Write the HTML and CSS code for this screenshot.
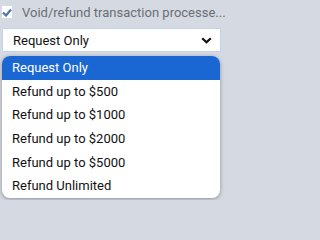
FILE: index.html
```html
<!DOCTYPE html>
<html>
<head>
<meta charset="utf-8">
<link rel="stylesheet" href="styles.css">
</head>
<body>
<div class="page">
  <div class="row">
    <span class="check">
      <svg width="10" height="9" viewBox="0 0 10 9"><path d="M1 4.5 L4 7.5 L9 1.5" fill="none" stroke="#4b7aa3" stroke-width="2.2"/></svg>
    </span>
    <span class="label">Void/refund transaction processe...</span>
  </div>
  <div class="select">
    <span>Request Only</span>
    <svg class="chev" width="11" height="7" viewBox="0 0 11 7"><path d="M1.2 1.2 L5.5 5.3 L9.8 1.2" fill="none" stroke="#111" stroke-width="2.2"/></svg>
  </div>
  <ul class="menu">
    <li class="active">Request Only</li>
    <li>Refund up to $500</li>
    <li>Refund up to $1000</li>
    <li>Refund up to $2000</li>
    <li>Refund up to $5000</li>
    <li>Refund Unlimited</li>
  </ul>
</div>
</body>
</html>
```
FILE: styles.css
```css
html, body {
  margin: 0;
  padding: 0;
  background: #d5dae2;
  font-family: Roboto, "Noto Sans", sans-serif;
}
.page {
  position: relative;
  width: 225px;
  height: 200px;
  overflow: hidden;
}
.row {
  display: flex;
  align-items: center;
  height: 22px;
  padding-top: 1px;
  padding-left: 2px;
  gap: 10px;
}
.check {
  width: 10px;
  height: 12px;
  background: #fff;
  display: flex;
  align-items: center;
  justify-content: center;
}
.label {
  font-size: 13px;
  color: #6a6e74;
  white-space: nowrap;
}
.select {
  margin: 5px 4px 0 2px;
  height: 22px;
  border: 1px solid #c3d3ef;
  background: #fff;
  display: flex;
  align-items: center;
  justify-content: space-between;
  padding: 0 8px 0 10px;
  font-size: 13px;
  color: #111;
}
.chev {
  display: block;
}
.menu {
  position: absolute;
  left: 2px;
  top: 56px;
  width: 218px;
  margin: 0;
  padding: 0;
  list-style: none;
  background: #fff;
  border-radius: 8px;
  overflow: hidden;
  box-shadow: 0 1px 4px rgba(0,0,0,0.35);
}
.menu li {
  height: 23.7px;
  line-height: 23.7px;
  padding-left: 10px;
  font-size: 13px;
  color: #111;
}
.menu li.active {
  background: #1a66d2;
  color: #fff;
}
```
